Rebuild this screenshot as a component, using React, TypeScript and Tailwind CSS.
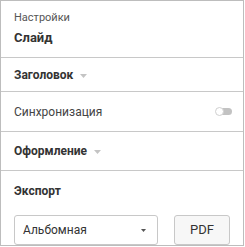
const font = { fontFamily: 'Roboto, "Noto Sans", sans-serif' }

function Caret() {
  return (
    <svg width="7" height="4" viewBox="0 0 7 4" className="ml-[7px] mt-[2px]" aria-hidden>
      <path d="M0 0h7L3.5 4z" fill="#c4c4c4" />
    </svg>
  )
}

export default function App() {
  return (
    <div
      className="flex h-[246px] w-[244px] flex-col border border-[#bdbdbd] bg-white text-[#333]"
      style={font}
    >
      <div className="flex h-[56px] flex-col px-[13px] pt-[10px]">
        <span className="text-[11px] leading-[13px] text-[#555]">Настройки</span>
        <span className="mt-[6px] text-[13px] font-bold leading-[16px]">Слайд</span>
      </div>
      <div className="flex h-[35px] items-center border-t border-[#c8c8c8] px-[13px]">
        <span className="text-[12px] font-bold">Заголовок</span>
        <Caret />
      </div>
      <div className="flex h-[40px] items-center justify-between border-t border-[#c8c8c8] pl-[13px] pr-[11px]">
        <span className="text-[12px] text-[#444]">Синхронизация</span>
        <span className="relative h-[7px] w-[16px] rounded-full bg-[#c2c2c2]">
          <span className="absolute -left-[1px] -top-[1px] h-[9px] w-[9px] rounded-full border border-[#d0d0d0] bg-white" />
        </span>
      </div>
      <div className="flex h-[39px] items-center border-t border-[#c8c8c8] px-[13px]">
        <span className="text-[12px] font-bold">Оформление</span>
        <Caret />
      </div>
      <div className="flex flex-1 flex-col border-t border-[#c8c8c8] px-[13px] pt-[13px]">
        <span className="text-[12px] font-bold leading-[14px]">Экспорт</span>
        <div className="mt-[17px] flex items-center gap-[16px]">
          <div className="flex h-[30px] w-[146px] items-center justify-between rounded-[3px] border border-[#c8c8c8] bg-white pl-[8px] pr-[11px]">
            <span className="text-[12px] text-[#333]">Альбомная</span>
            <svg width="5" height="3" viewBox="0 0 5 3" aria-hidden>
              <path d="M0 0h5L2.5 3z" fill="#555" />
            </svg>
          </div>
          <button className="flex h-[30px] w-[57px] items-center justify-center rounded-[3px] border border-[#c8c8c8] bg-[#f7f7f7] text-[13px] text-[#333]">
            PDF
          </button>
        </div>
      </div>
    </div>
  )
}
